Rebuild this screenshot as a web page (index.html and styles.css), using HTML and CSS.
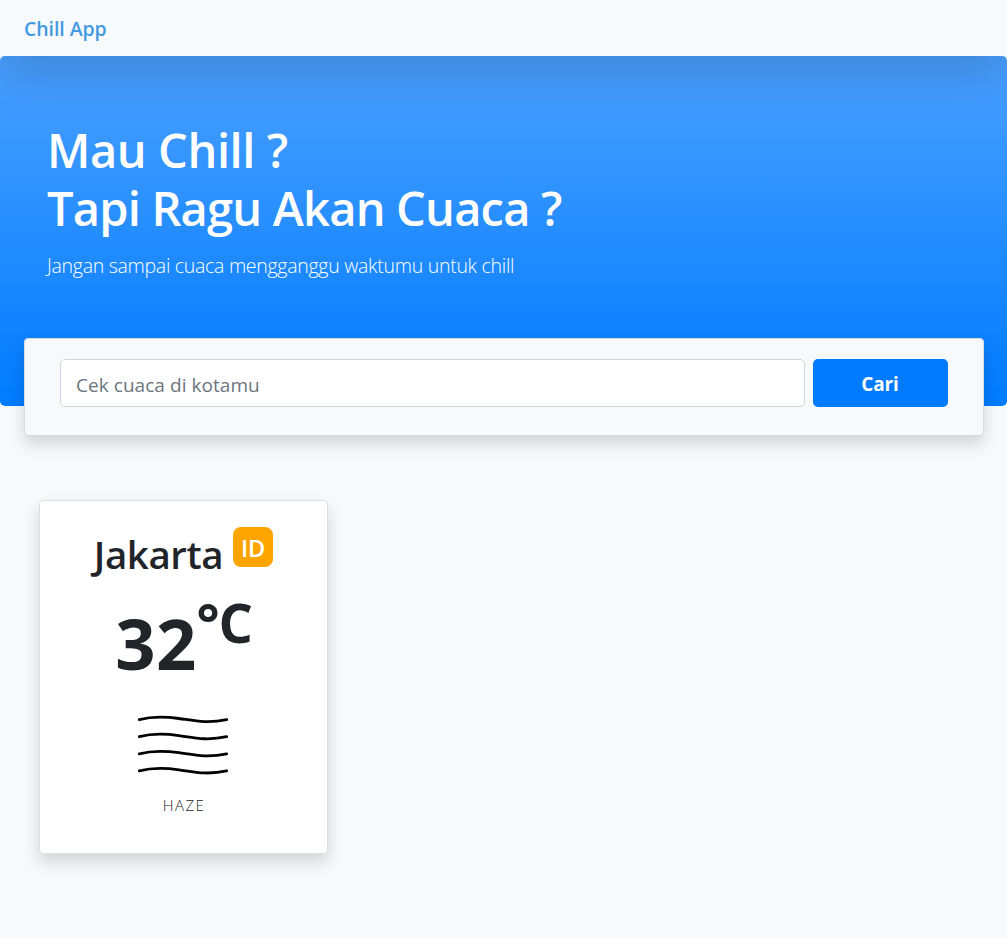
FILE: index.html
```html
<!DOCTYPE html>
<html lang="id">
<head>
<meta charset="utf-8">
<title>Chill App</title>
<link rel="stylesheet" href="styles.css">
</head>
<body>
<nav class="navbar"><a class="brand">Chill App</a></nav>
<main>
<header class="hero">
<h1 class="hero-title"><span class="line-one">Mau Chill ?</span><span class="line-two">Tapi Ragu Akan Cuaca ?</span></h1>
<p class="lead">Jangan sampai cuaca mengganggu waktumu untuk chill</p>
</header>
<form class="search">
<input class="search-input" type="text" placeholder="Cek cuaca di kotamu">
<button class="search-button" type="button">Cari</button>
</form>
<section class="results">
<article class="card">
<h2 class="city"><span class="city-name">Jakarta</span><span class="country">ID</span></h2>
<div class="temperature"><span class="degrees">32</span><span class="unit">°C</span></div>
<svg class="haze" viewBox="0 0 92 62" width="92" height="62" fill="none" stroke="#000" stroke-width="2.8" stroke-linecap="round">
<path id="wave" d="M2.3 5.6C14 2.5 27 2.4 42 4.5S70 9.9 89.7 5.6"/>
<use href="#wave" y="17.1"/>
<use href="#wave" y="34.2"/>
<use href="#wave" y="51.3"/>
</svg>
<p class="condition">HAZE</p>
</article>
</section>
</main>
</body>
</html>
```

FILE: styles.css
```css
* { box-sizing: border-box; }
body {
  margin: 0;
  min-height: 938px;
  background: #f6fafd;
  color: #212529;
  font-family: "Open Sans", "Noto Sans", sans-serif;
}
.navbar {
  position: relative;
  display: flex;
  align-items: center;
  height: 56px;
  padding: 0 24px;
  background: #f6fafd;
  box-shadow: 0 16px 48px rgba(0, 0, 0, .175);
}
.brand { color: #4299e1; font-size: 19.5px; font-weight: 600; letter-spacing: -.07px; }
.hero {
  height: 350px;
  padding: 66px 47px 0;
  border-radius: 5px;
  background: linear-gradient(#4aa0ff, #007bff);
  color: #fff;
}
.hero-title { margin: 0; font-size: 47px; font-weight: 600; line-height: 57.6px; white-space: nowrap; }
.line-one, .line-two { display: block; }
.line-one { letter-spacing: -.4px; }
.line-two { letter-spacing: -.8px; }
.lead { margin: 14px 0 0; font-size: 19.5px; font-weight: 300; line-height: 30px; letter-spacing: -.28px; white-space: nowrap; }
.search {
  position: relative;
  display: flex;
  gap: 8px;
  width: 960px;
  height: 98px;
  margin: -68px 0 0 24px;
  padding: 20px 35px;
  border: 1px solid #d8dadd;
  border-radius: 4px;
  background: #f8f9fb;
  box-shadow: 0 8px 16px rgba(0, 0, 0, .15);
}
.search-input {
  width: 745px;
  height: 48px;
  padding: 3px 15px 0;
  border: 1px solid #ced4da;
  border-radius: 5px;
  background: #fff;
  font: 400 19px "Open Sans", sans-serif;
  letter-spacing: .05px;
}
.search-input::placeholder { color: #6c757d; opacity: 1; }
.search-button {
  width: 135px;
  height: 48px;
  padding: 1px 1px 0 0;
  border: 0;
  border-radius: 5px;
  background: #007bff;
  color: #fff;
  font: 700 19px "Open Sans", sans-serif;
  letter-spacing: -.1px;
}
.results { padding: 64px 39px; }
.card {
  display: flex;
  flex-direction: column;
  align-items: center;
  width: 289px;
  height: 354px;
  padding-top: 26px;
  border: 1px solid #dfdfdf;
  border-radius: 4px;
  background: #fff;
  box-shadow: 0 8px 16px rgba(0, 0, 0, .15);
}
.city { display: flex; gap: 10px; margin: 0; font-weight: 600; }
.city-name { padding-top: 4px; font-size: 38.5px; line-height: 46px; letter-spacing: -.45px; }
.country {
  width: 40px;
  height: 40px;
  border-radius: 8px;
  background: orange;
  color: #fff;
  font-size: 23.5px;
  line-height: 43px;
  text-align: center;
}
.temperature { display: flex; height: 96px; margin-top: 16px; font-weight: 700; }
.degrees { padding-top: 2px; font-size: 70.5px; line-height: 96px; letter-spacing: .3px; }
.unit { font-size: 54px; line-height: 58px; letter-spacing: -1.2px; }
.haze { margin: 25px 2px 0 0; }
.condition { margin: 17px 0 0 1px; font-size: 15px; font-weight: 300; line-height: 24px; letter-spacing: 1.4px; }
```
